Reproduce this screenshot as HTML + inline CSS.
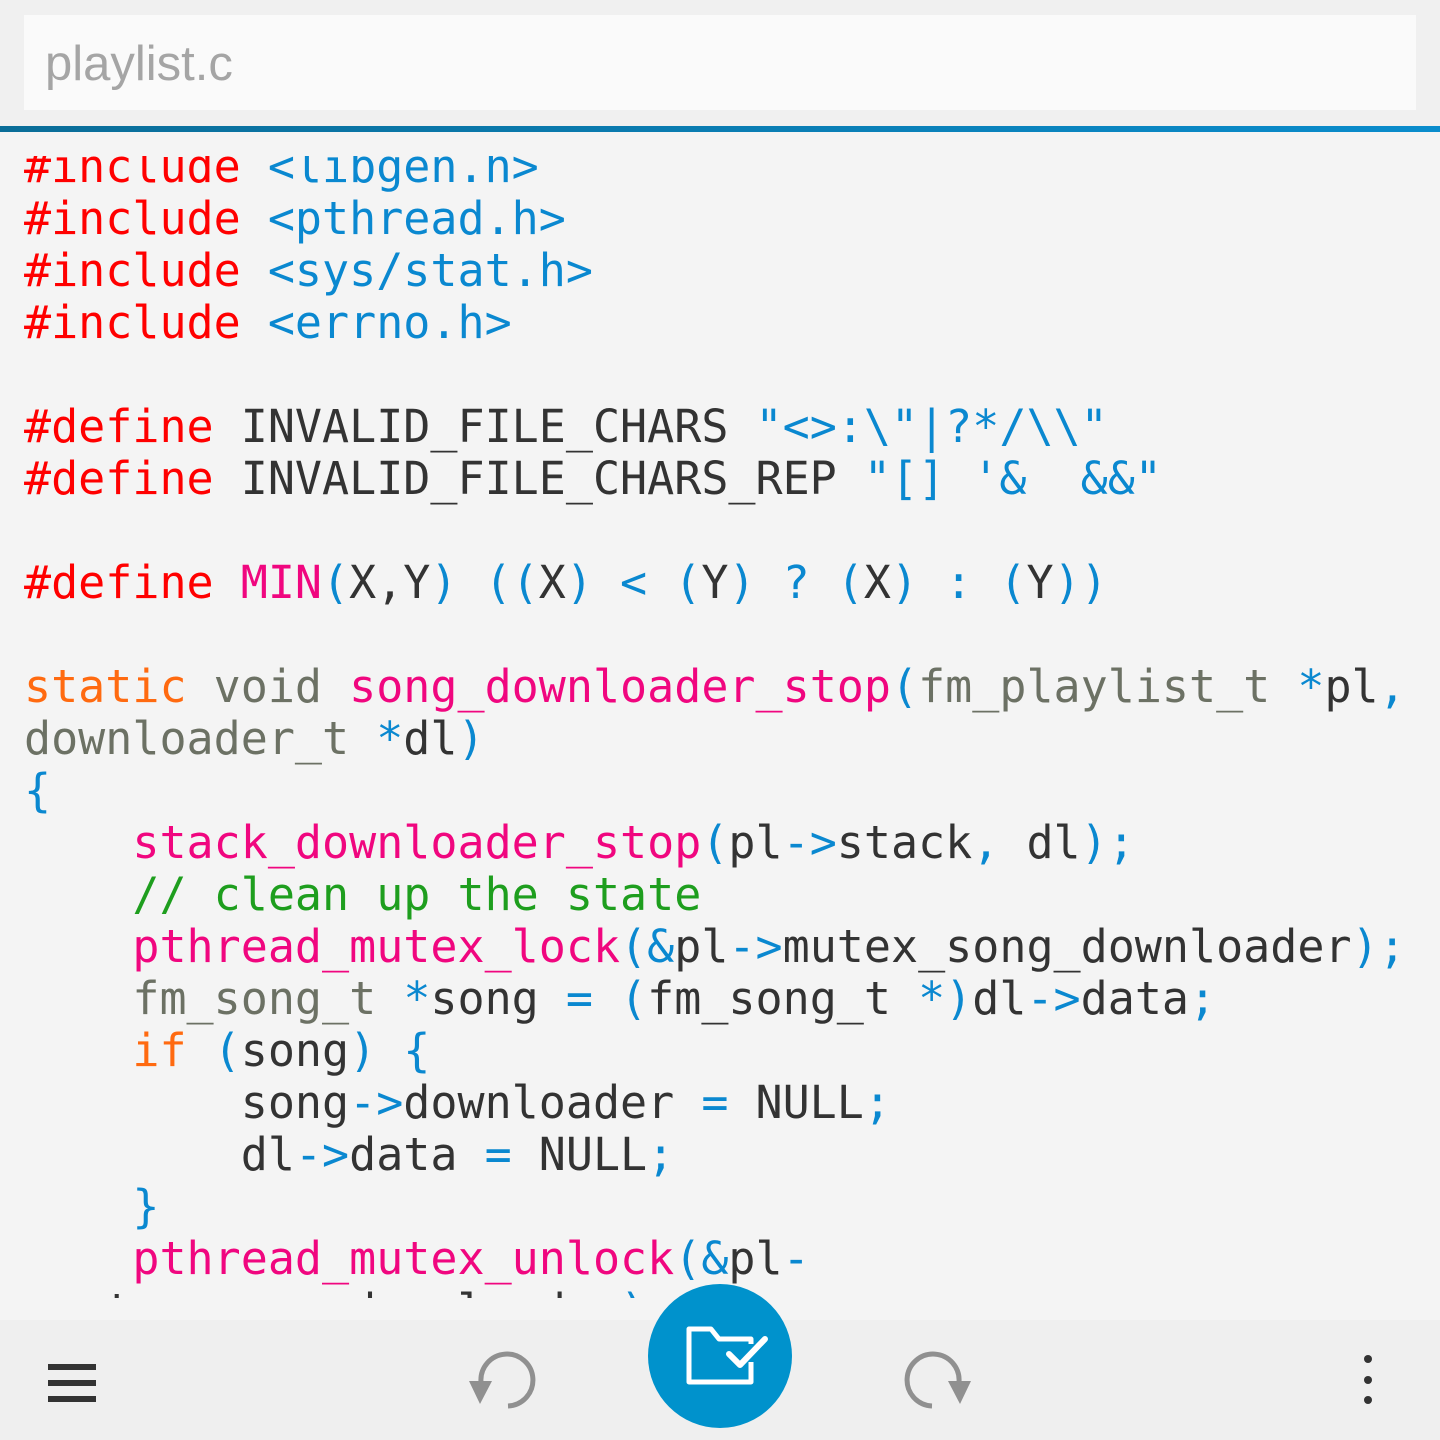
<!DOCTYPE html>
<html><head><meta charset="utf-8"><style>
html,body{margin:0;padding:0;width:1440px;height:1440px;overflow:hidden;background:#f4f4f4}
#hdr{position:absolute;left:0;top:0;width:1440px;height:126px;background:#f0f0f0}
#box{position:absolute;left:24px;top:15px;width:1392px;height:95px;background:#fafafa}
#box span{position:absolute;left:21px;top:21px;font:49px "Liberation Sans",sans-serif;color:#a5a5a5}
#line{position:absolute;left:0;top:126px;width:1440px;height:6px;background:linear-gradient(90deg,#0a6d98,#0a8ccc)}
#code{position:absolute;left:0;top:156px;width:1440px;height:1142px;overflow:hidden;background:#f4f4f4}
pre{position:absolute;left:24px;top:-15px;margin:0;font:45px/52px "DejaVu Sans Mono","Liberation Mono",monospace;color:#333;white-space:pre}
.r{color:#f00}.b{color:#0a88d0}.p{color:#f0067f}.o{color:#ff6a10}.g{color:#6c7164}.c{color:#1e9e1e}
#bar{position:absolute;left:0;top:1320px;width:1440px;height:120px;background:#efefef}
</style></head><body>
<div id="hdr"><div id="box"><span>playlist.c</span></div></div>
<div id="line"></div>
<div id="code"><pre><span class="r">#include</span> <span class="b">&lt;libgen.h&gt;</span>
<span class="r">#include</span> <span class="b">&lt;pthread.h&gt;</span>
<span class="r">#include</span> <span class="b">&lt;sys/stat.h&gt;</span>
<span class="r">#include</span> <span class="b">&lt;errno.h&gt;</span>

<span class="r">#define</span> INVALID_FILE_CHARS <span class="b">"&lt;&gt;:\"|?*/\\"</span>
<span class="r">#define</span> INVALID_FILE_CHARS_REP <span class="b">"[] '&amp;  &amp;&amp;"</span>

<span class="r">#define</span> <span class="p">MIN</span><span class="b">(</span>X,Y<span class="b">) ((</span>X<span class="b">) &lt; (</span>Y<span class="b">) ? (</span>X<span class="b">) : (</span>Y<span class="b">))</span>

<span class="o">static</span> <span class="g">void</span> <span class="p">song_downloader_stop</span><span class="b">(</span><span class="g">fm_playlist_t</span> <span class="b">*</span>pl<span class="b">,</span>
<span class="g">downloader_t</span> <span class="b">*</span>dl<span class="b">)</span>
<span class="b">{</span>
    <span class="p">stack_downloader_stop</span><span class="b">(</span>pl<span class="b">-&gt;</span>stack<span class="b">,</span> dl<span class="b">);</span>
    <span class="c">// clean up the state</span>
    <span class="p">pthread_mutex_lock</span><span class="b">(&amp;</span>pl<span class="b">-&gt;</span>mutex_song_downloader<span class="b">);</span>
    <span class="g">fm_song_t</span> <span class="b">*</span>song <span class="b">= (</span>fm_song_t <span class="b">*)</span>dl<span class="b">-&gt;</span>data<span class="b">;</span>
    <span class="o">if</span> <span class="b">(</span>song<span class="b">) {</span>
        song<span class="b">-&gt;</span>downloader <span class="b">=</span> NULL<span class="b">;</span>
        dl<span class="b">-&gt;</span>data <span class="b">=</span> NULL<span class="b">;</span>
    <span class="b">}</span>
    <span class="p">pthread_mutex_unlock</span><span class="b">(&amp;</span>pl<span class="b">-</span>
<span class="b">&gt;</span>mutex_song_downloader<span class="b">);</span></pre></div>
<div id="bar"></div>
<svg width="1440" height="1440" style="position:absolute;left:0;top:0">
<rect x="48" y="1364" width="48" height="6" fill="#333"/>
<rect x="48" y="1380" width="48" height="6" fill="#333"/>
<rect x="48" y="1396" width="48" height="6" fill="#333"/>
<circle cx="1368" cy="1359" r="4" fill="#333"/><circle cx="1368" cy="1380" r="4" fill="#333"/><circle cx="1368" cy="1400" r="4" fill="#333"/>
<path d="M508 1406 A26 26 0 1 0 481 1382" fill="none" stroke="#909090" stroke-width="5"/>
<path d="M469 1381 L492 1381 L480 1404 Z" fill="#909090"/>
<path d="M932 1406 A26 26 0 1 1 959 1382" fill="none" stroke="#909090" stroke-width="5"/>
<path d="M948 1381 L971 1381 L960 1404 Z" fill="#909090"/>
<circle cx="720" cy="1356" r="72" fill="#0092cc"/>
<path d="M751 1362 V1382 H689 V1329 H711 L719 1339 H751 V1344" fill="none" stroke="#fff" stroke-width="5" stroke-linejoin="round"/>
<path d="M729 1354 L740 1365 L765 1339" fill="none" stroke="#fff" stroke-width="6" stroke-linecap="round" stroke-linejoin="round"/>
</svg>
</body></html>
